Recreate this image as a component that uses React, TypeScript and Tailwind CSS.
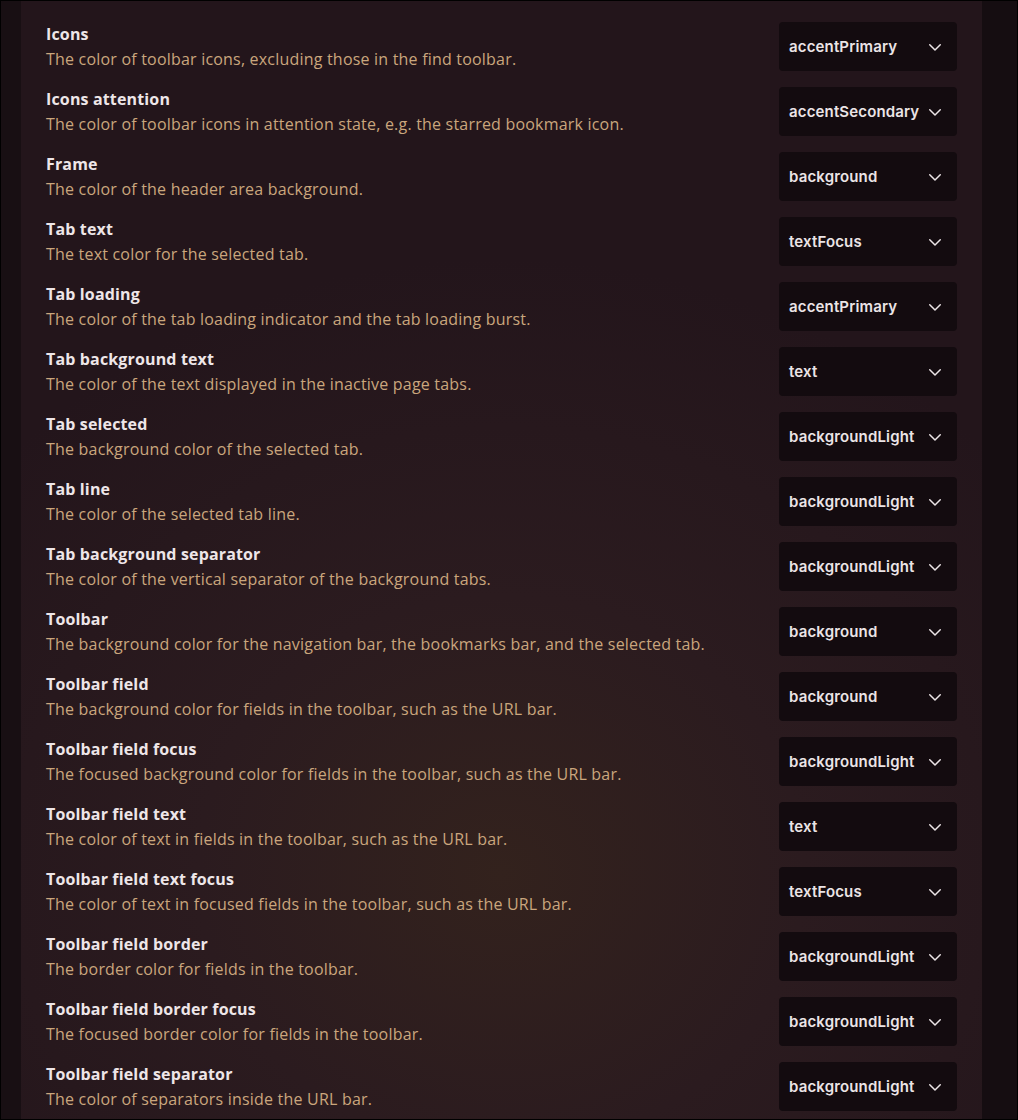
import React from "react";

const rows: [string, string, string][] = [
  ["Icons", "The color of toolbar icons, excluding those in the find toolbar.", "accentPrimary"],
  ["Icons attention", "The color of toolbar icons in attention state, e.g. the starred bookmark icon.", "accentSecondary"],
  ["Frame", "The color of the header area background.", "background"],
  ["Tab text", "The text color for the selected tab.", "textFocus"],
  ["Tab loading", "The color of the tab loading indicator and the tab loading burst.", "accentPrimary"],
  ["Tab background text", "The color of the text displayed in the inactive page tabs.", "text"],
  ["Tab selected", "The background color of the selected tab.", "backgroundLight"],
  ["Tab line", "The color of the selected tab line.", "backgroundLight"],
  ["Tab background separator", "The color of the vertical separator of the background tabs.", "backgroundLight"],
  ["Toolbar", "The background color for the navigation bar, the bookmarks bar, and the selected tab.", "background"],
  ["Toolbar field", "The background color for fields in the toolbar, such as the URL bar.", "background"],
  ["Toolbar field focus", "The focused background color for fields in the toolbar, such as the URL bar.", "backgroundLight"],
  ["Toolbar field text", "The color of text in fields in the toolbar, such as the URL bar.", "text"],
  ["Toolbar field text focus", "The color of text in focused fields in the toolbar, such as the URL bar.", "textFocus"],
  ["Toolbar field border", "The border color for fields in the toolbar.", "backgroundLight"],
  ["Toolbar field border focus", "The focused border color for fields in the toolbar.", "backgroundLight"],
  ["Toolbar field separator", "The color of separators inside the URL bar.", "backgroundLight"],
];

function Chevron() {
  return (
    <svg width="18" height="18" viewBox="0 0 24 24" fill="none" stroke="currentColor" strokeWidth="2" strokeLinecap="round" strokeLinejoin="round">
      <path d="M5 9l7 7 7-7" />
    </svg>
  );
}

export default function App() {
  return (
    <div className="w-[1018px] h-[1120px] overflow-hidden border border-black bg-[#150d11] flex">
      <div className="w-[20px] shrink-0 bg-[#180f13]" />
      <div
        className="w-[961px] shrink-0 h-full pt-[21px] pl-[25px] pr-[25px] flex flex-col gap-[16px]"
        style={{
          background:
            "radial-gradient(ellipse 70% 55% at 50% 78%, #33221d 0%, #2b1b1f 45%, #23151b 100%)",
        }}
      >
        {rows.map(([title, desc, val], i) => (
          <div key={i} className="flex items-center justify-between h-[49px] shrink-0">
            <div className="flex flex-col" style={{ fontFamily: '"Open Sans", "Noto Sans", sans-serif' }}>
              <div className="text-[16px] leading-[24px] font-bold text-[#eee6e8] tracking-[0.15px]">{title}</div>
              <div className="text-[16px] leading-[25px] mt-[1px] text-[#caa67d] tracking-[0.2px]">{desc}</div>
            </div>
            <div
              className="w-[178px] h-[49px] rounded-[4px] bg-[#130b0f] flex items-center justify-between pl-[10px] pr-[13px] pt-[1px] text-[#ebe4e6]"
              style={{ fontFamily: "Inter, sans-serif" }}
            >
              <span className="text-[15px] font-semibold tracking-[0.15px]">{val}</span>
              <Chevron />
            </div>
          </div>
        ))}
      </div>
      <div className="flex-1 bg-[#150d11]" />
    </div>
  );
}
